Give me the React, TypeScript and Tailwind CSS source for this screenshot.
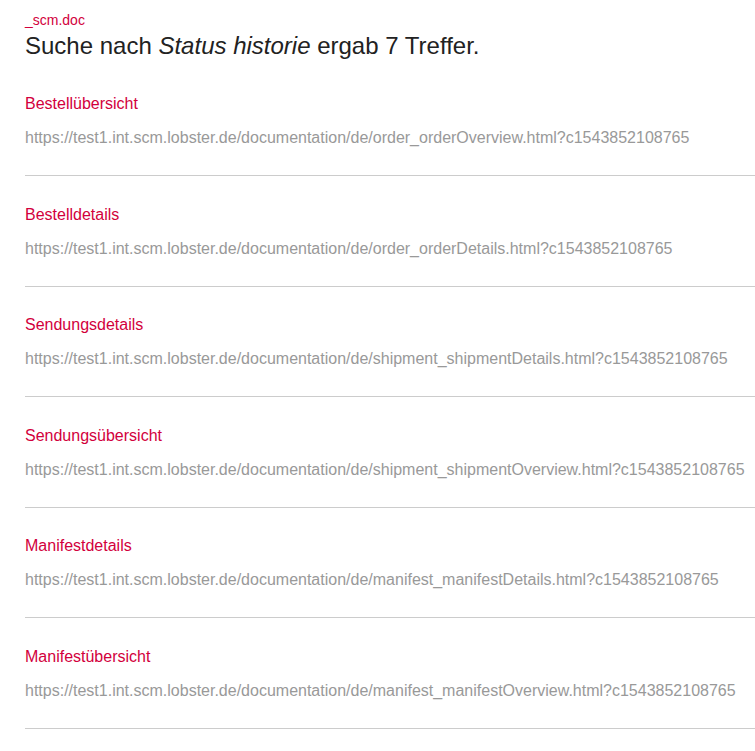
const results = [
  { title: 'Bestellübersicht', url: 'https://test1.int.scm.lobster.de/documentation/de/order_orderOverview.html?c1543852108765' },
  { title: 'Bestelldetails', url: 'https://test1.int.scm.lobster.de/documentation/de/order_orderDetails.html?c1543852108765' },
  { title: 'Sendungsdetails', url: 'https://test1.int.scm.lobster.de/documentation/de/shipment_shipmentDetails.html?c1543852108765' },
  { title: 'Sendungsübersicht', url: 'https://test1.int.scm.lobster.de/documentation/de/shipment_shipmentOverview.html?c1543852108765' },
  { title: 'Manifestdetails', url: 'https://test1.int.scm.lobster.de/documentation/de/manifest_manifestDetails.html?c1543852108765' },
  { title: 'Manifestübersicht', url: 'https://test1.int.scm.lobster.de/documentation/de/manifest_manifestOverview.html?c1543852108765' },
];

const App = () => {
  return (
    <div className="min-h-screen bg-white pl-[25px] pt-[12px] font-['Liberation_Sans',Arial,sans-serif]">
      <div className="text-[14px] leading-[16px] text-[#d2003c]">_scm.doc</div>
      <h1 className="mt-[2px] text-[24px] leading-[32px] text-[#222]">
        Suche nach <em>Status historie</em> ergab 7 Treffer.
      </h1>

      <div className="mt-[31px]">
        {results.map((r) => (
          <div key={r.title} className="border-b border-[#cccccc] pb-[26px] pt-[27.5px] first:pt-0">
            <div className="text-[16px] leading-[22px] text-[#d2003c]">{r.title}</div>
            <div className="mt-[12px] whitespace-nowrap text-[16px] leading-[22px] text-[#999]">{r.url}</div>
          </div>
        ))}
      </div>
    </div>
  );
};

export default App;
